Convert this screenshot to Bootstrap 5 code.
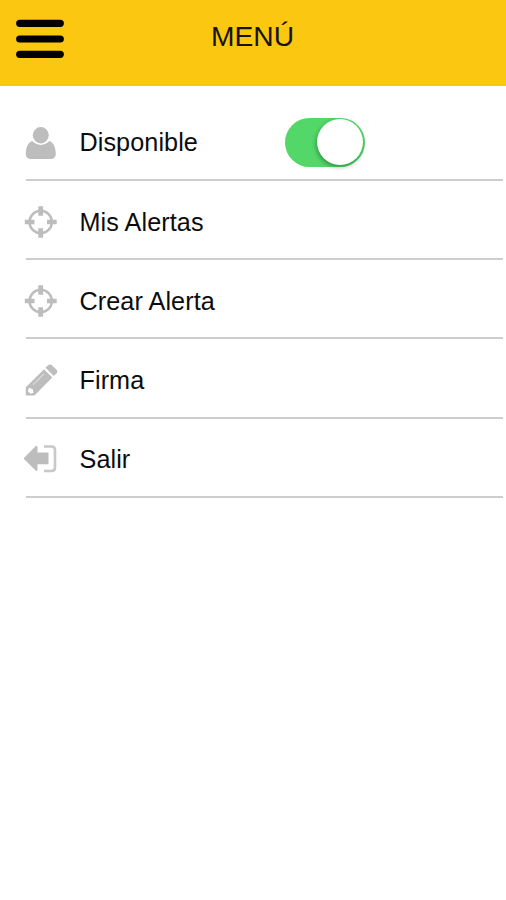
<!DOCTYPE html>
<html lang="es">
<head>
<meta charset="utf-8">
<meta name="viewport" content="width=device-width, initial-scale=1">
<title>Menú</title>
<link href="https://cdn.jsdelivr.net/npm/bootstrap@5.3.0/dist/css/bootstrap.min.css" rel="stylesheet">
<style>
  body { font-family: "Liberation Sans", Arial, sans-serif; color: #0c0c0c; }
  .app-bar { height: 85.5px; background: #fbc711; padding-left: 16px; }
  .menu-btn { width: 48px; height: 40px; margin-top: -7px; }
  .app-title { font-size: 28.2px; line-height: 32px; margin: -14px 0 0 147px; color: #16140a; }
  .menu-list { padding: 16.3px 3px 0 26px; }
  .menu-row { height: 79.2px; padding-top: 4px; border-bottom: 2px solid #cdcdcf; font-size: 25.2px; line-height: 30px; letter-spacing: .08px; color: inherit; }
  .menu-icon { width: 34px; height: 34px; margin: 0 21.5px 0 -2px; fill: #bdbdbd; }
  .menu-label { width: 205px; }
  .toggle { appearance: none; width: 80.5px; height: 49px; border-radius: 25px; background: #53d769; margin: 0; display: flex; justify-content: flex-end; padding: 1.5px 2.5px 1.5px 1.5px; }
  .toggle::before { content: ""; width: 46px; height: 46px; border-radius: 50%; background: #fff; box-shadow: -1px 2px 4px rgba(0, 60, 15, .42); }
</style>
</head>
<body class="bg-white">
<header class="app-bar d-flex align-items-center">
  <button class="menu-btn btn p-0 border-0 d-flex" type="button" aria-label="Menú">
    <svg width="48" height="40" viewBox="0 0 48 40"><path d="M3.7 4.3h40.6M3.7 20h40.6M3.7 35.3h40.6" stroke="#000" stroke-width="7.2" stroke-linecap="round"/></svg>
  </button>
  <h1 class="app-title fw-normal">MENÚ</h1>
</header>
<nav class="menu-list">
  <div class="menu-row d-flex align-items-center">
    <svg class="menu-icon flex-shrink-0" viewBox="0 -.8 34 34"><ellipse cx="16.8" cy="9.4" rx="8" ry="8.2"/><path d="M8.2 15.3C4 16.5 1.8 22 1.8 28.3c0 3 1.7 4.800 4.600 4.800h20.800c2.900 0 4.600-1.800 4.600-4.800 0-6.300-2.200-11.800-6.400-13-2.300 2.400-5.200 3.800-8.600 3.800s-6.300-1.400-8.600-3.800z"/></svg>
    <span class="menu-label">Disponible</span>
    <input class="toggle" type="checkbox" role="switch" aria-label="Disponible" checked>
  </div>
  <a class="menu-row d-flex align-items-center text-decoration-none" href="#">
    <svg class="menu-icon flex-shrink-0" viewBox="0 0 34 34"><circle cx="16.700" cy="17" r="11.200" fill="none" stroke="#bdbdbd" stroke-width="2.500"/><path d="M14.300 1.300h4.800v9.500h-4.800zM14.300 23.200h4.800v9.500h-4.800zM.8 14.700h9.700v4.600H.8zM23 14.700h9.700v4.600H23z"/></svg>
    <span class="menu-label">Mis Alertas</span>
  </a>
  <a class="menu-row d-flex align-items-center text-decoration-none" href="#">
    <svg class="menu-icon flex-shrink-0" viewBox="0 0 34 34"><circle cx="16.700" cy="17" r="11.200" fill="none" stroke="#bdbdbd" stroke-width="2.500"/><path d="M14.300 1.300h4.800v9.500h-4.800zM14.300 23.200h4.800v9.500h-4.800zM.8 14.700h9.700v4.600H.8zM23 14.700h9.700v4.600H23z"/></svg>
    <span class="menu-label">Crear Alerta</span>
  </a>
  <a class="menu-row d-flex align-items-center text-decoration-none" href="#">
    <svg class="menu-icon flex-shrink-0" viewBox="0 0 34 34"><path fill-rule="evenodd" d="M20 6.300 28.300 14.600 10.500 32.500H1.800V24.300zM5 24.800 3.800 28.200 6.500 30.800 9.500 29.700 8.800 26.200z"/><path d="M21.500 4.800 24 2.300q2-1.800 4 0L32.300 6.500q2 2 .2 4L29.800 13.100z"/><path d="M9.200 21.600 20 10.800" stroke="#dedede" stroke-width="1.100"/></svg>
    <span class="menu-label">Firma</span>
  </a>
  <a class="menu-row d-flex align-items-center text-decoration-none" href="#">
    <svg class="menu-icon flex-shrink-0" viewBox="0 0 34 34"><path d="M-.5 16.500 11.300 4.500q2.200-1.700 2.200 1v5.100h11v11.700h-11v5q0 2.700-2.200 1z"/><path d="M20 4.500h7.600q3.400 0 3.400 3.400V25.600q0 3.400-3.400 3.400H20" fill="none" stroke="#c8c8c8" stroke-width="2.600"/></svg>
    <span class="menu-label">Salir</span>
  </a>
</nav>
<script src="https://cdn.jsdelivr.net/npm/bootstrap@5.3.0/dist/js/bootstrap.bundle.min.js"></script>
</body>
</html>
